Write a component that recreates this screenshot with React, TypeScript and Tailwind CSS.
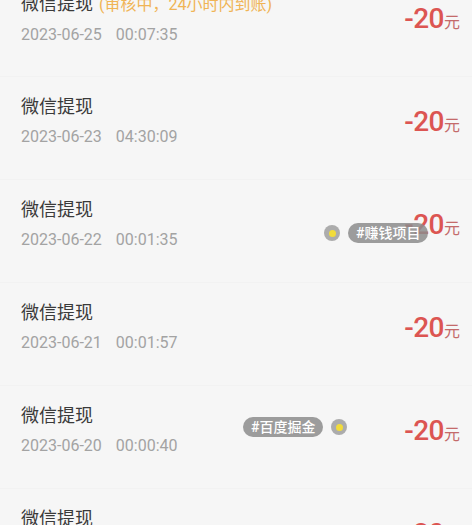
import React from "react";

type Row = { date: string; time: string; pending?: boolean };

const rows: Row[] = [
  { date: "2023-06-25", time: "00:07:35", pending: true },
  { date: "2023-06-23", time: "04:30:09" },
  { date: "2023-06-22", time: "00:01:35" },
  { date: "2023-06-21", time: "00:01:57" },
  { date: "2023-06-20", time: "00:00:40" },
  { date: "2023-06-19", time: "00:00:12" },
];

function Dot() {
  return (
    <div className="w-[16px] h-[16px] rounded-full bg-[#9a9a9a]/80 flex items-center justify-center">
      <div className="w-[7px] h-[7px] rounded-full bg-[#f2dc3a]" />
    </div>
  );
}

function Pill({ text }: { text: string }) {
  return (
    <div className="h-[20px] px-[8px] rounded-full bg-[#8c8c8c]/85 text-white text-[14px] font-medium leading-[20px] flex items-center">
      {text}
    </div>
  );
}

export default function App() {
  return (
    <div
      className="w-[472px] h-[525px] overflow-hidden bg-[#f6f6f6] relative"
      style={{ fontFamily: "Roboto, 'Noto Sans CJK SC', sans-serif" }}
    >
      <div className="mt-[-26px] flex flex-col">
        {rows.map((r, i) => (
          <div
            key={i}
            className="h-[103px] flex justify-between pl-[21px] pr-[12px] border-b border-[#f2f2f2]"
          >
            <div className="pt-[18px] flex flex-col">
              <div className="text-[18px] leading-[24px] text-[#3a3a3a] flex items-baseline">
                <span>微信提现</span>
                {r.pending && (
                  <span className="ml-[6px] text-[16px] text-[#f0b455]">(审核中，24小时内到账)</span>
                )}
              </div>
              <div className="mt-[8px] text-[16px] leading-[20px] text-[#a3a3a3] flex gap-[14px]">
                <span>{r.date}</span>
                <span>{r.time}</span>
              </div>
            </div>
            <div className="pt-[30px] flex items-baseline">
              <span className="text-[28px] leading-[30px] font-medium text-[#dc5552] tracking-[-0.5px]">-20</span>
              <span className="text-[16px] text-[#c46a6a]">元</span>
            </div>
          </div>
        ))}
      </div>

      <div className="absolute left-[324px] top-[223px] flex items-center gap-[8px]">
        <Dot />
        <Pill text="#赚钱项目" />
      </div>
      <div className="absolute left-[243px] top-[417px] flex items-center gap-[8px]">
        <Pill text="#百度掘金" />
        <Dot />
      </div>
    </div>
  );
}
